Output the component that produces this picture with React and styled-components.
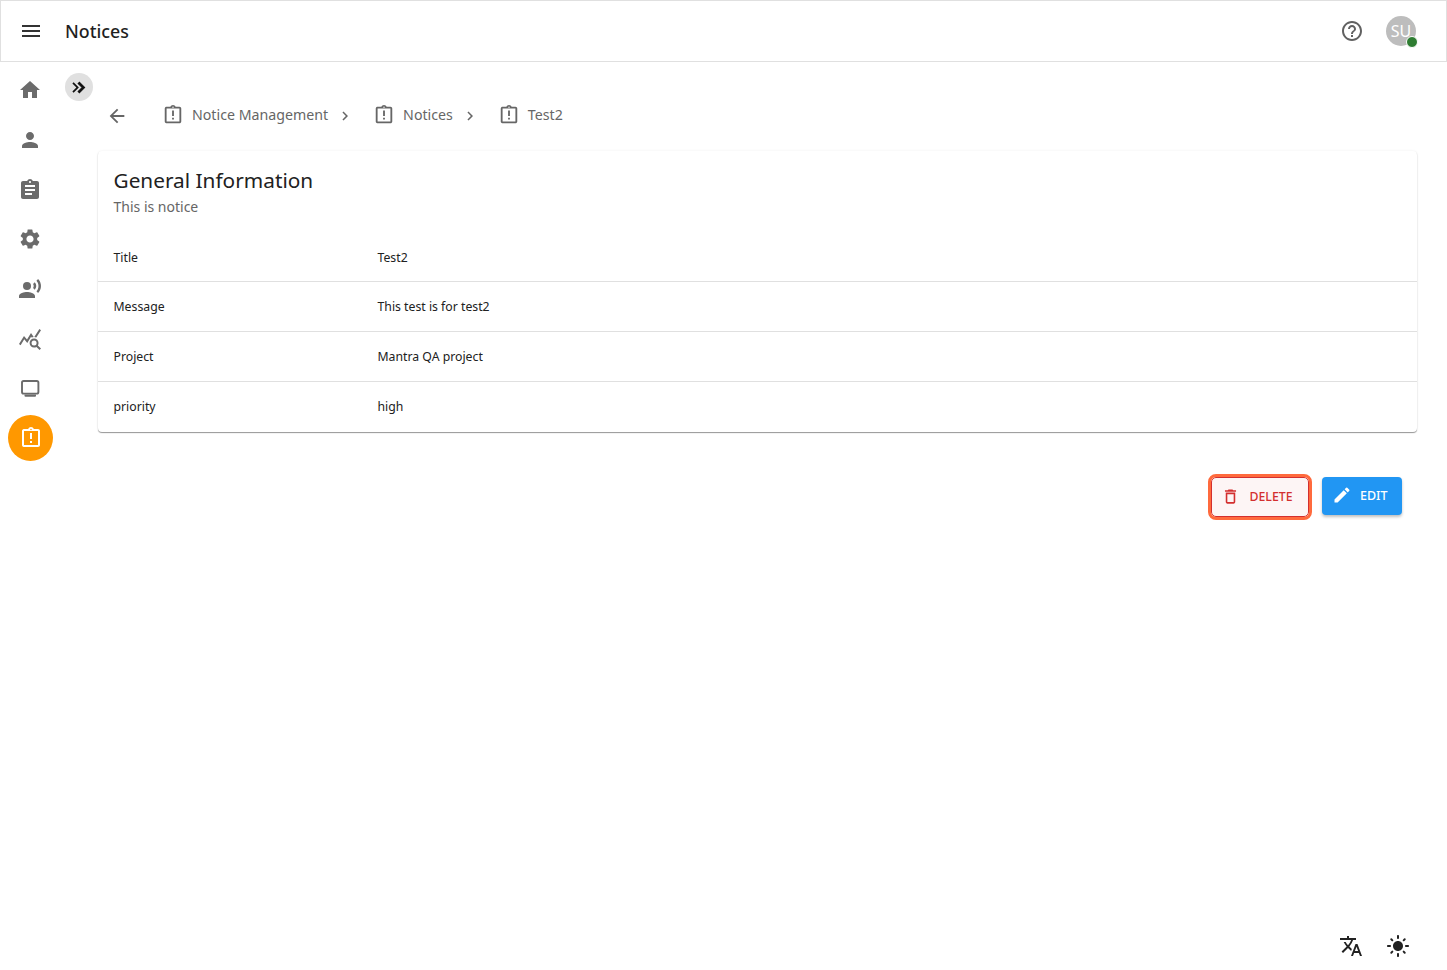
import React from 'react';
import styled, { createGlobalStyle } from 'styled-components';
import {
  MdMenu,
  MdHome,
  MdPerson,
  MdAssignment,
  MdSettings,
  MdRecordVoiceOver,
  MdQueryStats,
  MdOutlineAssignmentLate,
  MdKeyboardDoubleArrowRight,
  MdArrowBack,
  MdChevronRight,
  MdHelpOutline,
  MdDeleteOutline,
  MdEdit,
  MdTranslate,
  MdLightMode,
} from 'react-icons/md';

const GlobalStyle = createGlobalStyle`
  html, body {
    margin: 0;
    padding: 0;
    background: #fff;
    font-family: "Noto Sans", "Open Sans", sans-serif;
  }
  * { box-sizing: border-box; }
`;

const Page = styled.div`
  width: 1447px;
  height: 970px;
  display: flex;
  flex-direction: column;
  overflow: hidden;
`;

const TopBar = styled.header`
  height: 62px;
  flex: none;
  display: flex;
  align-items: center;
  padding: 0 30px 0 18px;
  border: 1px solid #e0e0e0;
`;

const MenuIcon = styled(MdMenu)`
  font-size: 24px;
  color: #333;
`;

const PageTitle = styled.h1`
  margin: 0 0 0 22px;
  font-size: 17.8px;
  font-weight: 500;
  color: #1f1f1f;
  flex: 1;
`;

const HelpIcon = styled(MdHelpOutline)`
  font-size: 24px;
  color: #616161;
  margin-right: 22px;
`;

const Avatar = styled.div`
  position: relative;
  width: 30px;
  height: 30px;
  border-radius: 50%;
  background: #bdbdbd;
  color: #fff;
  font-size: 16px;
  display: flex;
  align-items: center;
  justify-content: center;
`;

const StatusDot = styled.span`
  position: absolute;
  right: -2px;
  bottom: -2px;
  width: 12px;
  height: 12px;
  border-radius: 50%;
  background: #2e7d32;
  border: 1px solid #fff;
`;

const Body = styled.div`
  flex: 1;
  display: flex;
  min-height: 0;
`;

const SideNav = styled.nav`
  width: 60px;
  flex: none;
  display: flex;
  flex-direction: column;
  align-items: center;
  padding-top: 16px;
`;

const NavItem = styled.div`
  height: ${({ $active }) => ($active ? '46px' : '24px')};
  width: ${({ $active }) => ($active ? '45px' : '24px')};
  margin-bottom: ${({ $active }) => ($active ? '0' : '25.8px')};
  margin-top: ${({ $active }) => ($active ? '-11.5px' : '0')};
  margin-left: ${({ $active }) => ($active ? '1px' : '0')};
  border-radius: 50%;
  display: flex;
  align-items: center;
  justify-content: center;
  font-size: 24px;
  color: ${({ $active }) => ($active ? '#fff' : '#6b6b6b')};
  background: ${({ $active }) => ($active ? '#ff9800' : 'transparent')};
`;

const Main = styled.main`
  flex: 1;
  min-width: 0;
  padding: 11px 30px 0 5px;
  display: flex;
  flex-direction: column;
`;

const CollapseButton = styled.div`
  width: 28px;
  height: 28px;
  padding-right: 1px;
  border-radius: 50%;
  background: #e0e0e0;
  color: #111;
  font-size: 21px;
  display: flex;
  align-items: center;
  justify-content: center;
  svg path:last-child {
    stroke-width: 1.2;
  }
`;

const Breadcrumbs = styled.div`
  display: flex;
  align-items: center;
  height: 30px;
  margin: -1px 0 21px 41px;
  color: #666;
  font-size: 14.2px;
`;

const BackIcon = styled(MdArrowBack)`
  font-size: 22px;
  color: #666;
  margin: 2px 34px 0 0;
`;

const Crumb = styled.div`
  display: flex;
  align-items: center;
  gap: 8px;
  svg { font-size: 22px; }
`;

const CrumbLabel = styled.span`
  margin-bottom: 2px;
`;

const CrumbSeparator = styled(MdChevronRight)`
  font-size: 18px;
  margin: 2px 19px 0 8px;
  color: #666;
`;

const Card = styled.section`
  margin-left: 33px;
  background: #fff;
  border-radius: 4px;
  box-shadow: 0 1px 1px rgba(0, 0, 0, 0.4), 0 0 3px rgba(0, 0, 0, 0.06);
`;

const CardHeader = styled.div`
  padding: 14px 15.5px 17px;
`;

const CardTitle = styled.h2`
  margin: 0;
  font-size: 20.8px;
  line-height: 31px;
  font-weight: 400;
  color: #212121;
`;

const CardSubtitle = styled.p`
  margin: 1px 0 0;
  font-size: 14px;
  line-height: 19px;
  color: #666;
`;

const Row = styled.div`
  display: flex;
  align-items: center;
  height: ${({ $height }) => $height}px;
  padding: 0 15.5px ${({ $last }) => ($last ? '2px' : '0')};
  font-size: 12.25px;
  color: #212121;
  border-bottom: ${({ $last }) => ($last ? 'none' : '1px solid #e0e0e0')};
`;

const RowLabel = styled.div`
  width: 264px;
  flex: none;
`;

const Actions = styled.div`
  display: flex;
  justify-content: flex-end;
  align-items: center;
  gap: 13px;
  padding-right: 15px;
  margin-top: 45px;
`;

const DeleteButton = styled.button`
  width: 98px;
  height: 40px;
  display: flex;
  align-items: center;
  gap: 10px;
  padding: 0 0 1px 8.5px;
  font: 500 12.3px "Noto Sans", sans-serif;
  color: #d32f2f;
  background: #fdf5f5;
  border: 1px solid #d32f2f;
  border-radius: 5px;
  outline: 3px solid #ff6a3d;
  outline-offset: 0;
  svg { font-size: 19px; }
`;

const EditButton = styled.button`
  width: 80px;
  height: 38px;
  display: flex;
  align-items: center;
  gap: 8px;
  padding: 0 0 2px 10px;
  font: 500 12.5px "Noto Sans", sans-serif;
  color: #fff;
  background: #2196f3;
  border: none;
  border-radius: 4px;
  box-shadow: 0 2px 3px rgba(0, 0, 0, 0.25);
  margin-top: -2px;
  svg { font-size: 20px; }
`;

const BottomTools = styled.div`
  position: fixed;
  right: 37px;
  top: 934px;
  display: flex;
  gap: 23px;
  color: #222;
  font-size: 24px;
`;

// monitor with a solid stand, the package icons have a thin one
const MonitorIcon = () => (
  <svg width="24" height="24" viewBox="0 0 24 24" fill="currentColor">
    <rect x="4" y="4" width="16.4" height="12.6" rx="1.6" fill="none" stroke="currentColor" strokeWidth="1.9" />
    <path d="M6.5 17.5h11.5v1.2a1 1 0 0 1-1 1h-9.5a1 1 0 0 1-1-1z" />
  </svg>
);

const navIcons = [MdHome, MdPerson, MdAssignment, MdSettings, MdRecordVoiceOver, MdQueryStats, MonitorIcon];

const crumbs = ['Notice Management', 'Notices', 'Test2'];

const rows = [
  ['Title', 'Test2', 49],
  ['Message', 'This test is for test2', 50],
  ['Project', 'Mantra QA project', 50],
  ['priority', 'high', 50],
];

export default function App() {
  return (
    <Page>
      <GlobalStyle />
      <TopBar>
        <MenuIcon />
        <PageTitle>Notices</PageTitle>
        <HelpIcon />
        <Avatar>
          SU
          <StatusDot />
        </Avatar>
      </TopBar>
      <Body>
        <SideNav>
          {navIcons.map((Icon, i) => (
            <NavItem key={i}>
              <Icon />
            </NavItem>
          ))}
          <NavItem $active>
            <MdOutlineAssignmentLate />
          </NavItem>
        </SideNav>
        <Main>
          <CollapseButton>
            <MdKeyboardDoubleArrowRight />
          </CollapseButton>
          <Breadcrumbs>
            <BackIcon />
            {crumbs.map((label, i) => (
              <React.Fragment key={label}>
                <Crumb>
                  <MdOutlineAssignmentLate />
                  <CrumbLabel>{label}</CrumbLabel>
                </Crumb>
                {i < crumbs.length - 1 && <CrumbSeparator />}
              </React.Fragment>
            ))}
          </Breadcrumbs>
          <Card>
            <CardHeader>
              <CardTitle>General Information</CardTitle>
              <CardSubtitle>This is notice</CardSubtitle>
            </CardHeader>
            {rows.map(([label, value, height], i) => (
              <Row key={label} $height={height} $last={i === rows.length - 1}>
                <RowLabel>{label}</RowLabel>
                <div>{value}</div>
              </Row>
            ))}
          </Card>
          <Actions>
            <DeleteButton>
              <MdDeleteOutline />
              DELETE
            </DeleteButton>
            <EditButton>
              <MdEdit />
              EDIT
            </EditButton>
          </Actions>
        </Main>
      </Body>
      <BottomTools>
        <MdTranslate />
        <MdLightMode />
      </BottomTools>
    </Page>
  );
}
